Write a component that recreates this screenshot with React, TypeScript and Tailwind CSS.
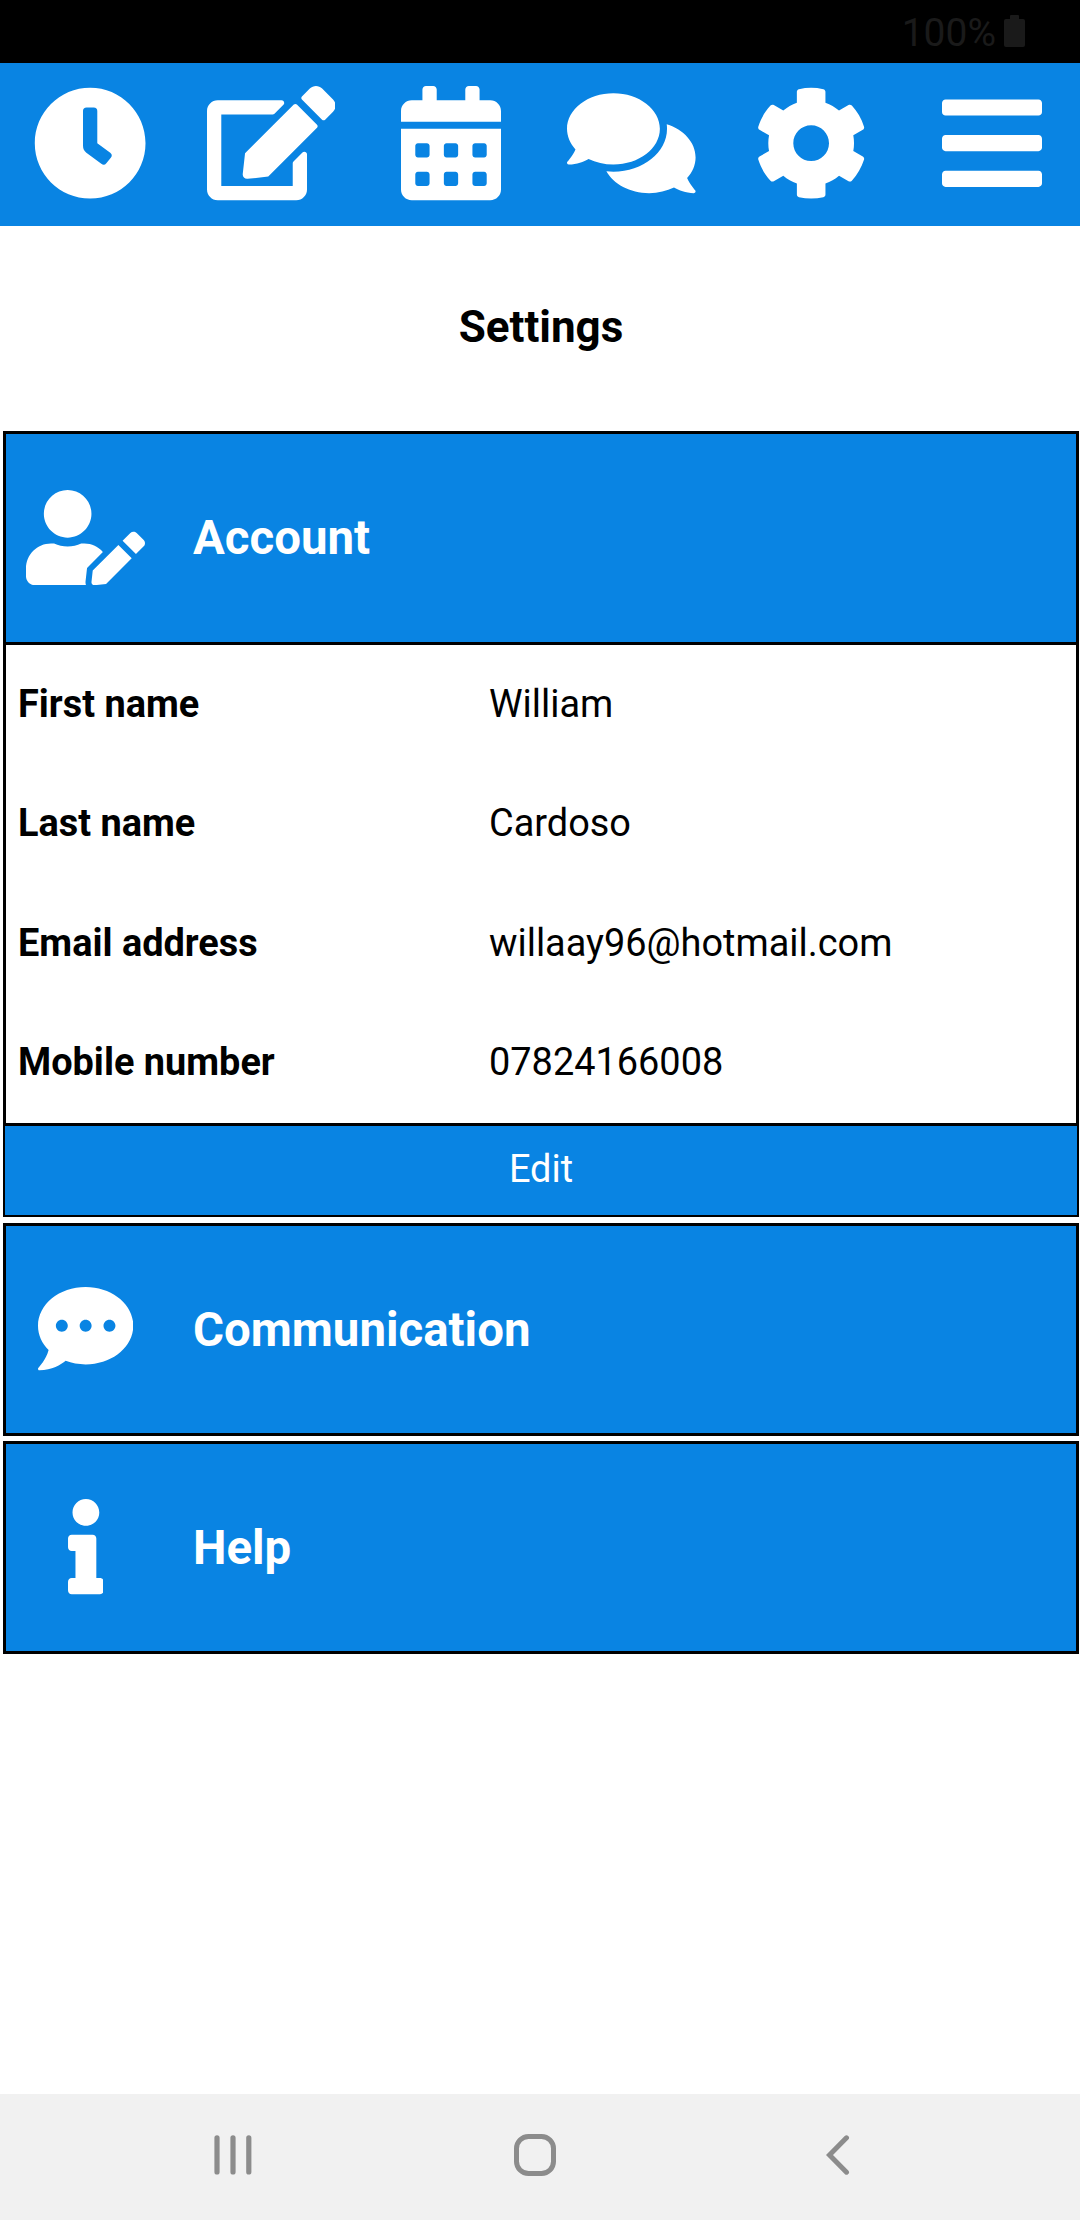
import type { ReactNode } from "react";
import {
  FaBars,
  FaCalendarAlt,
  FaClock,
  FaCog,
  FaCommentDots,
  FaComments,
  FaEdit,
  FaInfo,
  FaUserEdit,
} from "react-icons/fa";

function StatusBar() {
  return (
    <div className="flex h-[63px] shrink-0 items-start justify-end bg-black pr-[55px] text-[#1a1a1a]">
      <span className="mr-2 mt-[10px] text-[39px] leading-[46px]">100%</span>
      <div className="mt-[15px] flex flex-col items-center">
        <div className="h-1 w-[9px] rounded-t-[1px] bg-[#1a1a1a]" />
        <div className="h-[28px] w-[21px] rounded-[2px] bg-[#1a1a1a]" />
      </div>
    </div>
  );
}

function TopNav() {
  return (
    <header className="h-[163px] shrink-0 overflow-hidden bg-[#0984e3] text-white">
      <div className="-mr-[2px] grid h-full grid-cols-6 items-center justify-items-center pb-[2px] pl-[0.5px]">
        <FaClock className="h-[114.3px] w-[114.3px]" />
        <FaEdit className="h-[114.3px] w-[128.6px]" />
        <FaCalendarAlt className="h-[114.3px] w-[100px]" />
        <FaComments className="h-[114.3px] w-[128.6px]" />
        <FaCog className="h-[114.3px] w-[114.3px]" />
        <FaBars className="h-[114.3px] w-[100px]" />
      </div>
    </header>
  );
}

function SectionHeader({ icon, title }: { icon: ReactNode; title: string }) {
  return (
    <div className="flex h-full items-center bg-[#0984e3] text-white">
      <div className="ml-5 flex w-[119px] justify-center pb-px">{icon}</div>
      <h2 className="ml-12 text-[47.4px] font-bold leading-[56px]">{title}</h2>
    </div>
  );
}

const details = [
  ["First name", "William"],
  ["Last name", "Cardoso"],
  ["Email address", "willaay96@hotmail.com"],
  ["Mobile number", "07824166008"],
];

export default function App() {
  return (
    <div className="flex h-[2220px] w-[1080px] flex-col overflow-hidden bg-white font-['Roboto',sans-serif] text-black">
      <StatusBar />
      <TopNav />

      <main className="flex grow flex-col pl-[3px] pr-px">
        <h1 className="mb-[3px] flex h-[202px] items-center justify-center text-[44px] font-bold">
          Settings
        </h1>

        <section>
          <div className="h-[214px] border-[3px] border-black">
            <SectionHeader icon={<FaUserEdit className="h-[95.3px] w-[119px]" />} title="Account" />
          </div>
          <dl className="grid h-[481px] grid-rows-4 border-x-[3px] border-b-[3px] border-black text-[37.9px]">
            {details.map(([label, value]) => (
              <div key={label} className="flex items-center pb-px pl-3">
                <dt className="w-[471px] font-bold">{label}</dt>
                <dd>{value}</dd>
              </div>
            ))}
          </dl>
          <button className="flex h-[91px] w-full items-center justify-center border-x-2 border-b-2 border-black bg-[#0984e3] pb-[2px] text-[37.9px] text-white">
            Edit
          </button>
        </section>

        <section className="mt-[6px] h-[213px] border-[3px] border-black">
          <SectionHeader icon={<FaCommentDots className="h-[95.3px] w-[95.3px]" />} title="Communication" />
        </section>

        <section className="mt-[5px] h-[213px] border-[3px] border-black">
          <SectionHeader icon={<FaInfo className="h-[95.3px] w-[35.8px]" />} title="Help" />
        </section>
      </main>

      <footer className="flex h-[126px] shrink-0 items-center bg-[#f1f1f1] pb-[4px] text-[#8c8c8c]">
        <svg viewBox="0 0 38 40" className="ml-[214px] h-10 w-[38px]" fill="none" stroke="currentColor" strokeWidth="5.2" strokeLinecap="round">
          <path d="M3 2.8V37M19 2.8V37M34.8 2.8V37" />
        </svg>
        <svg viewBox="0 0 42 42" className="ml-[262px] h-[42px] w-[42px]" fill="none" stroke="currentColor" strokeWidth="5">
          <rect x="2.5" y="2.5" width="37" height="37" rx="12" />
        </svg>
        <svg viewBox="0 0 24 40" className="ml-[270px] h-10 w-6" fill="none" stroke="currentColor" strokeWidth="5" strokeLinecap="round" strokeLinejoin="miter">
          <path d="M20.5 2.8L3.5 20L20.5 37.2" />
        </svg>
      </footer>
    </div>
  );
}
